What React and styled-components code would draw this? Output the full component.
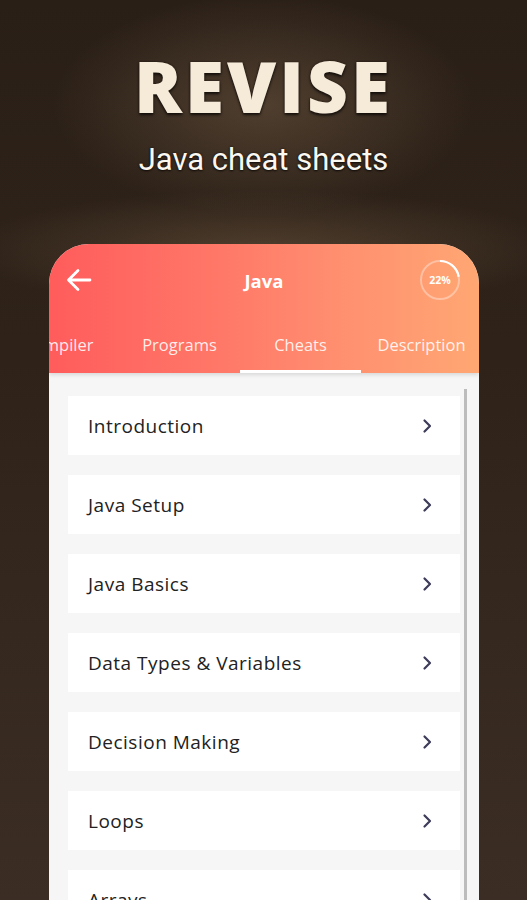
import React from "react";
import styled, { createGlobalStyle } from "styled-components";

const GlobalStyle = createGlobalStyle`
  html, body {
    margin: 0;
    padding: 0;
    background: #2a1f17;
  }
  * {
    box-sizing: border-box;
  }
`;

const items = [
  "Introduction",
  "Java Setup",
  "Java Basics",
  "Data Types & Variables",
  "Decision Making",
  "Loops",
  "Arrays",
];

const tabs = ["Compiler", "Programs", "Cheats", "Description"];

function BackArrow() {
  return (
    <svg width="28" height="28" viewBox="0 0 28 28" fill="none">
      <path
        d="M25 14H4M13 4.5L3.5 14L13 23.5"
        stroke="#fff"
        strokeWidth="2.8"
        strokeLinecap="round"
        strokeLinejoin="round"
      />
    </svg>
  );
}

function Chevron() {
  return (
    <svg width="10" height="16" viewBox="0 0 10 16" fill="none">
      <path
        d="M2.5 2.5L8 8L2.5 13.5"
        stroke="#3c3c5a"
        strokeWidth="2.2"
        strokeLinecap="round"
        strokeLinejoin="round"
      />
    </svg>
  );
}

function Progress({ value }) {
  const r = 19;
  const c = 2 * Math.PI * r;
  return (
    <Ring>
      <svg width="42" height="42" viewBox="0 0 42 42">
        <circle cx="21" cy="21" r={r} fill="none" stroke="rgba(255,255,255,0.35)" strokeWidth="2" />
        <circle
          cx="21"
          cy="21"
          r={r}
          fill="none"
          stroke="#fff"
          strokeWidth="2.2"
          strokeDasharray={`${(c * value) / 100} ${c}`}
          transform="rotate(-90 21 21)"
        />
      </svg>
      <RingLabel>{value}%</RingLabel>
    </Ring>
  );
}

export default function App() {
  return (
    <Page>
      <GlobalStyle />
      <Hero>
        <Title>REVISE</Title>
        <Subtitle>Java cheat sheets</Subtitle>
      </Hero>
      <Phone>
        <Header>
          <TopBar>
            <BackArrow />
            <AppTitle>Java</AppTitle>
            <Progress value={22} />
          </TopBar>
          <TabStrip>
            {tabs.map((t) => (
              <Tab key={t} active={t === "Cheats"}>
                {t}
              </Tab>
            ))}
          </TabStrip>
        </Header>
        <ListArea>
          <List>
            {items.map((label) => (
              <Card key={label}>
                <CardLabel>{label}</CardLabel>
                <Chevron />
              </Card>
            ))}
          </List>
          <Scrollbar />
        </ListArea>
      </Phone>
    </Page>
  );
}

const Page = styled.div`
  width: 527px;
  height: 900px;
  overflow: hidden;
  display: flex;
  flex-direction: column;
  align-items: center;
  background:
    radial-gradient(ellipse 210px 110px at 263px 105px, rgba(110, 88, 66, 0.55), transparent 100%),
    radial-gradient(ellipse 300px 60px at 263px 250px, rgba(120, 95, 70, 0.45), transparent 100%),
    linear-gradient(180deg, #2a1f17 0%, #2f2319 40%, #3b2d23 100%);
`;

const Hero = styled.div`
  flex-shrink: 0;
  display: flex;
  flex-direction: column;
  align-items: center;
  padding-top: 45px;
  height: 244px;
`;

const Title = styled.h1`
  margin: 0;
  font-family: "Open Sans", "DejaVu Sans", sans-serif;
  font-weight: 800;
  font-size: 71px;
  line-height: 82px;
  letter-spacing: 3px;
  color: #f6ebd8;
  text-shadow: 0 0 2px #1a120c, 0 2px 3px rgba(0, 0, 0, 0.7);
`;

const Subtitle = styled.div`
  margin-top: 14px;
  font-family: Roboto, "Noto Sans", sans-serif;
  font-size: 31px;
  line-height: 38px;
  color: #fbf8f2;
  text-shadow: 0 0 2px #1a120c, 0 1px 2px rgba(0, 0, 0, 0.7);
`;

const Phone = styled.div`
  width: 430px;
  flex: 1;
  min-height: 0;
  margin-left: 1px;
  border-radius: 40px 40px 0 0;
  overflow: hidden;
  background: #f6f6f6;
  display: flex;
  flex-direction: column;
  font-family: "Open Sans", "Noto Sans", sans-serif;
`;

const Header = styled.div`
  flex: 0 0 129px;
  background: linear-gradient(90deg, #ff5c5c 0%, #ff7868 40%, #ff9170 70%, #ffa773 100%);
  display: flex;
  flex-direction: column;
  box-shadow: 0 2px 4px rgba(0, 0, 0, 0.12);
  position: relative;
  z-index: 1;
`;

const TopBar = styled.div`
  flex: 0 0 72px;
  display: flex;
  align-items: center;
  justify-content: space-between;
  padding: 0 18px 0 16px;
  position: relative;
`;

const AppTitle = styled.div`
  position: absolute;
  left: 0;
  right: 0;
  text-align: center;
  font-weight: 700;
  font-size: 18.5px;
  color: #fff;
  pointer-events: none;
`;

const Ring = styled.div`
  position: relative;
  width: 42px;
  height: 42px;
  display: flex;
  align-items: center;
  justify-content: center;
  svg {
    position: absolute;
    inset: 0;
  }
`;

const RingLabel = styled.span`
  font-size: 10.5px;
  font-weight: 700;
  color: #fff;
`;

const TabStrip = styled.div`
  flex: 1;
  display: flex;
  margin-left: -51px;
`;

const Tab = styled.div`
  flex: 0 0 121px;
  display: flex;
  align-items: center;
  justify-content: center;
  font-size: 16.5px;
  color: rgba(255, 255, 255, 0.88);
  border-bottom: 3px solid ${(p) => (p.active ? "#fff" : "transparent")};
  padding-top: 2px;
`;

const ListArea = styled.div`
  flex: 1;
  min-height: 0;
  display: flex;
  position: relative;
`;

const List = styled.div`
  flex: 1;
  display: flex;
  flex-direction: column;
  gap: 20px;
  padding: 23px 0 0 19px;
`;

const Card = styled.div`
  width: 392px;
  flex: 0 0 59px;
  background: #fff;
  display: flex;
  align-items: center;
  justify-content: space-between;
  padding: 0 28px 0 20px;
`;

const CardLabel = styled.span`
  font-size: 19px;
  font-weight: 500;
  color: #222;
  letter-spacing: 0.5px;
`;

const Scrollbar = styled.div`
  position: absolute;
  right: 12px;
  top: 16px;
  bottom: 0;
  width: 3px;
  background: #bcbcbc;
`;
